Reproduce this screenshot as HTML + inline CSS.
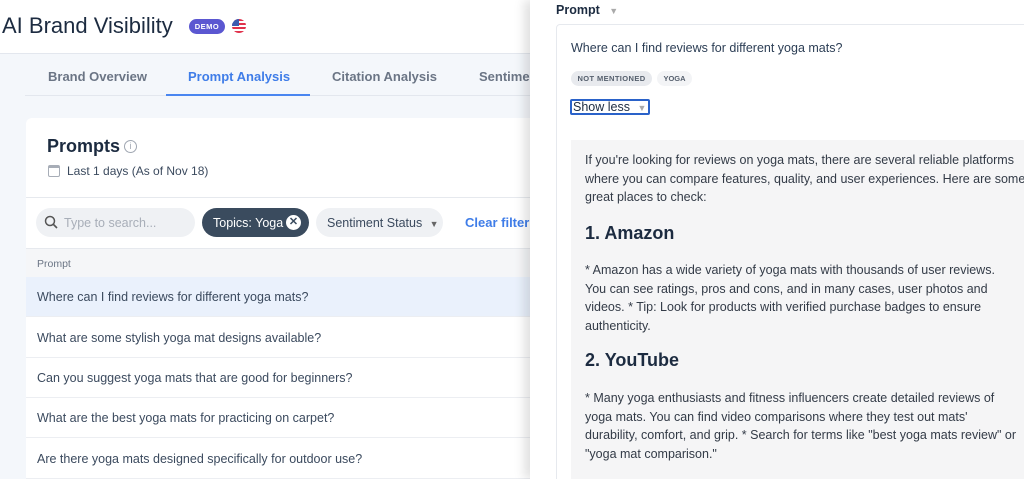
<!DOCTYPE html>
<html style="overflow:hidden"><head><style>
*{margin:0;padding:0;box-sizing:border-box}
html,body{width:1024px;height:479px;overflow:hidden}
body{position:relative;background:#f4f7fb;font-family:"Liberation Sans",sans-serif;color:#2c3e55}
.a{position:absolute;white-space:nowrap}
.row{position:absolute;left:26px;width:510px;height:40px;background:#fff;border-bottom:1px solid #eceef2;font-size:12.5px;color:#3b4a5e;padding:13px 0 0 11px}
.p{font-size:12.5px;line-height:18.5px;color:#333b47;white-space:normal;width:438px}
</style></head><body>
<div class="a" style="left:0;top:0;width:540px;height:54px;background:#fff;border-bottom:1px solid #e3e7ee"></div>
<div class="a" style="left:2px;top:13px;font-size:22px;color:#1c2b40">AI Brand Visibility</div>
<div class="a" style="left:189px;top:19px;width:36px;height:15px;border-radius:8px;background:#5b57d1;color:#fff;font-size:7.5px;font-weight:bold;text-align:center;line-height:15px;letter-spacing:.5px">DEMO</div>
<div class="a" style="left:232px;top:19px;width:14px;height:14px;border-radius:50%;background:repeating-linear-gradient(#e0314b 0 2px,#fff 2px 4px);overflow:hidden"><div style="width:7px;height:7px;background:#3c5bb0"></div></div>
<div class="a" style="left:48px;top:69px;font-size:13px;font-weight:bold;color:#6b7585">Brand Overview</div>
<div class="a" style="left:188px;top:69px;font-size:13px;font-weight:bold;color:#3f7de8">Prompt Analysis</div>
<div class="a" style="left:332px;top:69px;font-size:13px;font-weight:bold;color:#6b7585">Citation Analysis</div>
<div class="a" style="left:479px;top:69px;font-size:13px;font-weight:bold;color:#6b7585">Sentime</div>
<div class="a" style="left:25px;top:95px;width:515px;height:1px;background:#e3e7ee"></div>
<div class="a" style="left:166px;top:94px;width:144px;height:2px;background:#4a86f0"></div>
<div class="a" style="left:26px;top:118px;width:514px;height:361px;background:#fff;border-radius:6px 0 0 0"></div>
<div class="a" style="left:47px;top:136px;font-size:18px;font-weight:bold;color:#1c2b40">Prompts</div>
<div class="a" style="left:124px;top:140px;width:13px;height:13px;border:1.3px solid #a0a7b2;border-radius:50%;font-size:9px;color:#a0a7b2;text-align:center;line-height:11px">i</div>
<div class="a" style="left:48px;top:165px;width:12px;height:12px;border:1px solid #a7adb7;border-top-width:3px;border-radius:2px"></div>
<div class="a" style="left:67px;top:164px;font-size:12px;color:#3b4a5e">Last 1 days (As of Nov 18)</div>
<div class="a" style="left:26px;top:197px;width:514px;height:1px;background:#e6e9ee"></div>
<div class="a" style="left:36px;top:208px;width:159px;height:29px;border-radius:15px;background:#eff1f4"></div>
<svg class="a" style="left:44px;top:215px" width="14" height="14"><circle cx="6" cy="6" r="4.5" fill="none" stroke="#555" stroke-width="1.5"/><path d="M9.5 9.5L13 13" stroke="#555" stroke-width="1.6"/></svg>
<div class="a" style="left:64px;top:216px;font-size:12.5px;color:#a8aeb8">Type to search...</div>
<div class="a" style="left:202px;top:208px;width:107px;height:29px;border-radius:15px;background:#3a4b5e;color:#fff;font-size:12.5px;padding:8px 0 0 11px">Topics: Yoga</div>
<div class="a" style="left:286px;top:215px;width:15px;height:15px;border-radius:50%;background:#fff;color:#3a4b5e;font-size:11px;font-weight:bold;text-align:center;line-height:15px">✕</div>
<div class="a" style="left:316px;top:208px;width:127px;height:29px;border-radius:15px;background:#eff1f4;color:#3b4a5e;font-size:12.5px;padding:8px 0 0 11px">Sentiment Status <span style="font-size:9px;color:#666;margin-left:4px">▼</span></div>
<div class="a" style="left:465px;top:215px;font-size:13px;font-weight:bold;color:#3f7de8">Clear filter</div>
<div class="a" style="left:26px;top:248px;width:514px;height:29px;background:#f5f6f8;border-top:1px solid #e6e9ee;font-size:10.5px;color:#6b7585;padding:9px 0 0 11px">Prompt</div>
<div class="row" style="top:277px;background:#eaf1fc">Where can I find reviews for different yoga mats?</div>
<div class="row" style="top:318px">What are some stylish yoga mat designs available?</div>
<div class="row" style="top:358px">Can you suggest yoga mats that are good for beginners?</div>
<div class="row" style="top:398px">What are the best yoga mats for practicing on carpet?</div>
<div class="row" style="top:439px">Are there yoga mats designed specifically for outdoor use?</div>
<div class="a" style="left:530px;top:0;width:494px;height:479px;background:#fff;box-shadow:-6px 0 10px rgba(0,0,0,.12)"></div>
<div class="a" style="left:556px;top:3px;font-size:12.5px;font-weight:bold;color:#1c2b40">Prompt <span style="font-size:9px;color:#aaa;margin-left:6px">▼</span></div>
<div class="a" style="left:556px;top:24px;width:480px;height:470px;border:1px solid #e6e9ee;border-radius:4px"></div>
<div class="a" style="left:571px;top:41px;font-size:12.5px;color:#2c3e55">Where can I find reviews for different yoga mats?</div>
<div class="a" style="left:571px;top:71px;width:81px;height:15px;border-radius:8px;background:#e8eaee;font-size:7.5px;font-weight:bold;color:#555f6d;text-align:center;line-height:15px;letter-spacing:.4px">NOT MENTIONED</div>
<div class="a" style="left:657px;top:71px;width:35px;height:15px;border-radius:8px;background:#f3f4f6;font-size:7.5px;font-weight:bold;color:#555f6d;text-align:center;line-height:15px">YOGA</div>
<div class="a" style="left:570px;top:99px;width:80px;height:16px;border:2px solid #2a62c9;border-radius:2px;font-size:12.5px;color:#1c2b40;line-height:12px;padding-left:1px">Show less <span style="font-size:9px;color:#aaa;margin-left:4px">▼</span></div>
<div class="a" style="left:571px;top:140px;width:460px;height:340px;background:#f5f5f6"></div>
<div class="a p" style="left:585px;top:151px;width:450px">If you're looking for reviews on yoga mats, there are several reliable platforms where you can compare features, quality, and user experiences. Here are some great places to check:</div>
<div class="a" style="left:585px;top:223px;font-size:18px;font-weight:bold;color:#1c2b40">1. Amazon</div>
<div class="a p" style="left:585px;top:261px;width:430px">* Amazon has a wide variety of yoga mats with thousands of user reviews. You can see ratings, pros and cons, and in many cases, user photos and videos. * Tip: Look for products with verified purchase badges to ensure authenticity.</div>
<div class="a" style="left:585px;top:350px;font-size:18px;font-weight:bold;color:#1c2b40">2. YouTube</div>
<div class="a p" style="left:585px;top:389px;width:436px">* Many yoga enthusiasts and fitness influencers create detailed reviews of yoga mats. You can find video comparisons where they test out mats' durability, comfort, and grip. * Search for terms like "best yoga mats review" or "yoga mat comparison."</div>
</body></html>
